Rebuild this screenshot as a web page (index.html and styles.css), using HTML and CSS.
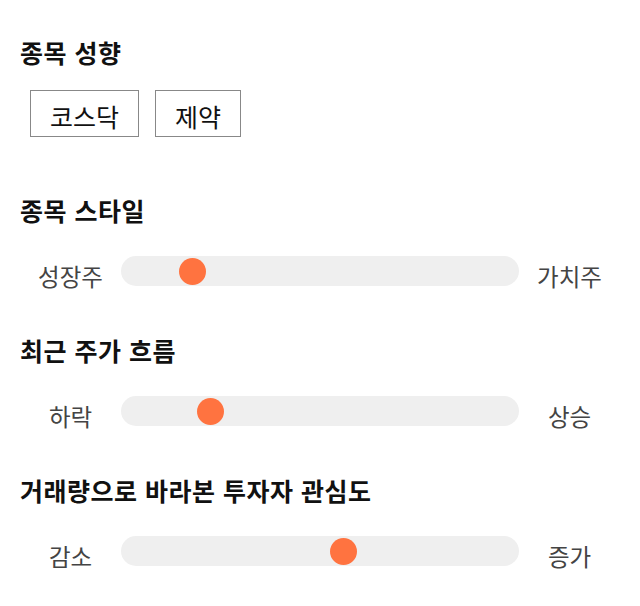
FILE: index.html
```html
<!DOCTYPE html>
<html lang="ko">
<head>
<meta charset="utf-8">
<link rel="stylesheet" href="styles.css">
</head>
<body>
<div class="page">
  <section class="section">
    <h2 class="title">종목 성향</h2>
    <div class="tags">
      <span class="tag">코스닥</span>
      <span class="tag">제약</span>
    </div>
  </section>
  <section class="section">
    <h2 class="title">종목 스타일</h2>
    <div class="slider-row">
      <span class="label">성장주</span>
      <div class="track"><span class="thumb" style="left: 14.5%"></span></div>
      <span class="label">가치주</span>
    </div>
  </section>
  <section class="section">
    <h2 class="title">최근 주가 흐름</h2>
    <div class="slider-row">
      <span class="label">하락</span>
      <div class="track"><span class="thumb" style="left: 19%"></span></div>
      <span class="label">상승</span>
    </div>
  </section>
  <section class="section">
    <h2 class="title">거래량으로 바라본 투자자 관심도</h2>
    <div class="slider-row">
      <span class="label">감소</span>
      <div class="track"><span class="thumb" style="left: 52.5%"></span></div>
      <span class="label">증가</span>
    </div>
  </section>
</div>
</body>
</html>
```
FILE: styles.css
```css
html, body {
  margin: 0;
  padding: 0;
  background: #fff;
}
body {
  font-family: "Noto Sans CJK KR", "Noto Sans", sans-serif;
  color: #000;
}
.page {
  padding: 32px 20px 0 20px;
  display: flex;
  flex-direction: column;
}
.section {
  display: flex;
  flex-direction: column;
  margin-bottom: 44px;
}
.section:first-child {
  margin-bottom: 53px;
}
.title {
  margin: 0;
  font-size: 25px;
  font-weight: 700;
  line-height: 36px;
  letter-spacing: 0.5px;
  color: #111;
  padding-top: 2px;
  height: 36px;
  box-sizing: border-box;
}
.tags {
  display: flex;
  gap: 16px;
  margin: 22px 0 0 10px;
}
.tag {
  border: 1px solid #888;
  height: 47px;
  padding: 5px 19px 0;
  display: flex;
  align-items: center;
  justify-content: center;
  font-size: 25px;
  box-sizing: border-box;
  color: #111;
}
.slider-row {
  display: flex;
  align-items: center;
  height: 30px;
  margin-top: 30px;
}
.label {
  width: 101px;
  text-align: center;
  font-size: 23.5px;
  line-height: 30px;
  color: #444;
  padding-top: 10px;
}
.track {
  flex: 1;
  height: 30px;
  background: #efefef;
  border-radius: 15px;
  position: relative;
}
.thumb {
  position: absolute;
  top: 2px;
  width: 27px;
  height: 27px;
  border-radius: 50%;
  background: #ff7340;
}
```
